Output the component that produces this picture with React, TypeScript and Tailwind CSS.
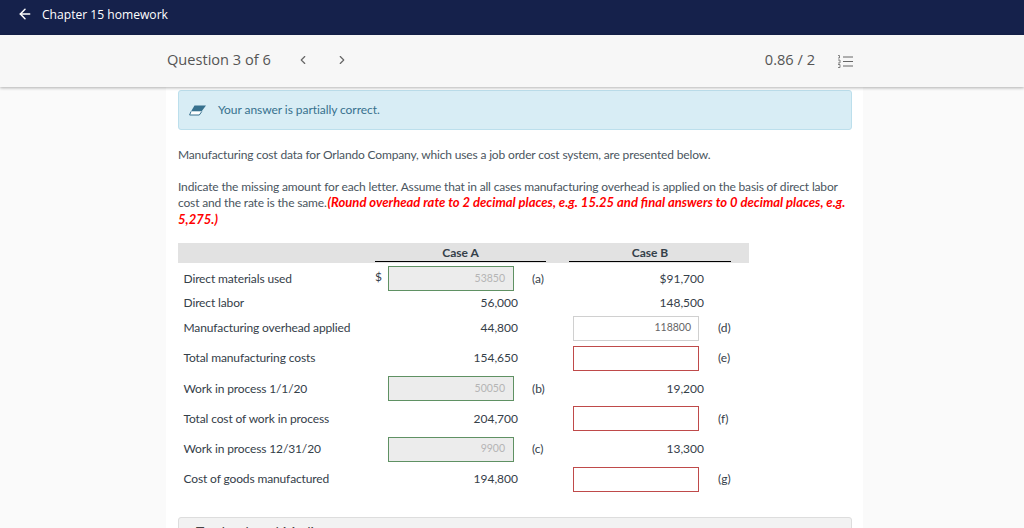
import { ArrowLeft, ChevronLeft, ChevronRight } from 'lucide-react';

type Row = {
  label: string;
  a?: string;
  aInput?: string;
  aNote?: string;
  dollar?: boolean;
  b?: string;
  bInput?: string;
  bError?: boolean;
  bNote?: string;
  height: string;
};

const rows: Row[] = [
  { label: 'Direct materials used', aInput: '53850', aNote: '(a)', dollar: true, b: '$91,700', height: 'h-[29px]' },
  { label: 'Direct labor', a: '56,000', b: '148,500', height: 'h-[20px]' },
  { label: 'Manufacturing overhead applied', a: '44,800', bInput: '118800', bNote: '(d)', height: 'h-[30.25px]' },
  { label: 'Total manufacturing costs', a: '154,650', bError: true, bNote: '(e)', height: 'h-[30.25px]' },
  { label: 'Work in process 1/1/20', aInput: '50050', aNote: '(b)', b: '19,200', height: 'h-[30.25px]' },
  { label: 'Total cost of work in process', a: '204,700', bError: true, bNote: '(f)', height: 'h-[30.25px]' },
  { label: 'Work in process 12/31/20', aInput: '9900', aNote: '(c)', b: '13,300', height: 'h-[30.25px]' },
  { label: 'Cost of goods manufactured', a: '194,800', bError: true, bNote: '(g)', height: 'h-[30.25px]' },
];

function EraserIcon() {
  return (
    <svg width="18" height="11" viewBox="0 0 18 11" fill="none">
      <path d="M5.5 0.5H17L12.5 6.5H2Z" fill="#37718e" />
      <path d="M2 6.5L0.6 10H10.3L12.8 6.5" stroke="#37718e" strokeWidth="1" fill="#fff" />
    </svg>
  );
}

function ListIcon() {
  return (
    <svg width="15" height="13" viewBox="0 0 15 13" fill="none">
      <path d="M5 2H15M5 6.5H15M5 11H15" stroke="#666" strokeWidth="1" />
      <path d="M0 0.5H1.5V3H0M0 5H2V8H0M0 9.5H2V12.5H0" stroke="#666" strokeWidth="0.8" />
    </svg>
  );
}

function AnswerBox({ value }: { value: string }) {
  return (
    <div className="flex h-[25px] w-[126px] items-center justify-end border border-[#5f9163] bg-[#ececec] pr-2 text-[10.5px] text-[#b5b5b5]">
      {value}
    </div>
  );
}

function TableRow({ row }: { row: Row }) {
  return (
    <div className={`flex items-center ${row.height}`}>
      <div className="w-[197px] shrink-0 pl-[5.5px] tracking-[-0.13px]">{row.label}</div>
      <div className="flex w-[194px] shrink-0 items-center">
        <div className="w-[13px] shrink-0 self-start pt-[2px] leading-[18px]">{row.dollar && '$'}</div>
        {row.aInput ? (
          <>
            <AnswerBox value={row.aInput} />
            <div className="pl-[18px]">{row.aNote}</div>
          </>
        ) : (
          <div className="w-[130px] text-right">{row.a}</div>
        )}
      </div>
      <div className="flex shrink-0 items-center">
        {row.bError || row.bInput ? (
          <>
            <div
              className={`ml-[4px] flex h-[25px] w-[126px] items-center justify-end pr-[7px] text-[10.5px] text-[#666] ${
                row.bError ? 'border border-[#bf4a4a]' : 'border border-[#d0d0d0]'
              }`}
            >
              {row.bInput}
            </div>
            <div className="pl-[19px]">{row.bNote}</div>
          </>
        ) : (
          <div className="w-[135px] text-right">{row.b}</div>
        )}
      </div>
    </div>
  );
}

export default function App() {
  return (
    <div className="h-[528px] overflow-hidden bg-[#fafafa] font-['Lato',sans-serif] text-[12px] text-[#354049]">
      <div className="flex h-[35px] items-start gap-[9px] bg-[#15214b] pl-[17px] pt-[6px] font-['Open_Sans',sans-serif] text-[12.1px] font-medium text-white">
        <ArrowLeft size={16} strokeWidth={2.25} />
        <span>Chapter 15 homework</span>
      </div>

      <div className="relative z-10 flex h-[52px] items-center bg-[#f7f7f7] pb-[2px] pl-[167px] pr-[171px] font-['Open_Sans',sans-serif] text-[14.6px] text-[#555] shadow-[0_1px_3px_rgba(0,0,0,0.3)]">
        <span>Question 3 of 6</span>
        <ChevronLeft size={14} className="ml-[25px] text-[#666]" />
        <ChevronRight size={14} className="ml-[25px] text-[#666]" />
        <span className="ml-auto">0.86 / 2</span>
        <span className="ml-[23px] mt-[2px]">
          <ListIcon />
        </span>
      </div>

      <div className="ml-[166px] mr-[161px] h-[441px] overflow-hidden bg-white pl-[12px] pr-[11px] pt-[3px] text-[#4a5560]">
        <div className="flex h-[40px] items-center gap-[11px] rounded-[3px] border border-[#bcdfec] bg-[#d8edf5] pl-[10px] tracking-[-0.06px] text-[#37718e]">
          <EraserIcon />
          <span>Your answer is partially correct.</span>
        </div>

        <p className="mt-[17px] leading-[16px] tracking-[-0.16px]">
          Manufacturing cost data for Orlando Company, which uses a job order cost system, are presented below.
        </p>
        <p className="mt-[16px] leading-[16.4px] tracking-[-0.16px]">
          Indicate the missing amount for each letter. Assume that in all cases manufacturing overhead is applied on the
          basis of direct labor cost and the rate is the same.{' '}
          <span className="ml-[-2px] text-[13.05px] font-bold italic leading-none tracking-normal text-[#ff0000]">
            (Round overhead rate to 2 decimal places, e.g. 15.25 and final answers to 0 decimal places, e.g. 5,275.)
          </span>
        </p>

        <div className="mt-[14.8px] flex h-[20px] w-[571px] items-start bg-[#e2e2e2] font-bold text-[#354049]">
          <div className="ml-[197px] h-[19px] w-[171px] border-b border-black text-center leading-[19px]">Case A</div>
          <div className="ml-[23px] h-[19px] w-[162px] border-b border-black text-center leading-[19px]">Case B</div>
        </div>

        <div className="pt-[1px] text-[#354049]">
          {rows.map((row) => (
            <TableRow key={row.label} row={row} />
          ))}
        </div>

        <div className="mt-[22px] h-[40px] rounded-t-[3px] border border-[#ddd] bg-[#f2f2f2] pl-[17px] pt-[3px] text-[14px] text-[#444]">
          Textbook and Media
        </div>
      </div>
    </div>
  );
}
